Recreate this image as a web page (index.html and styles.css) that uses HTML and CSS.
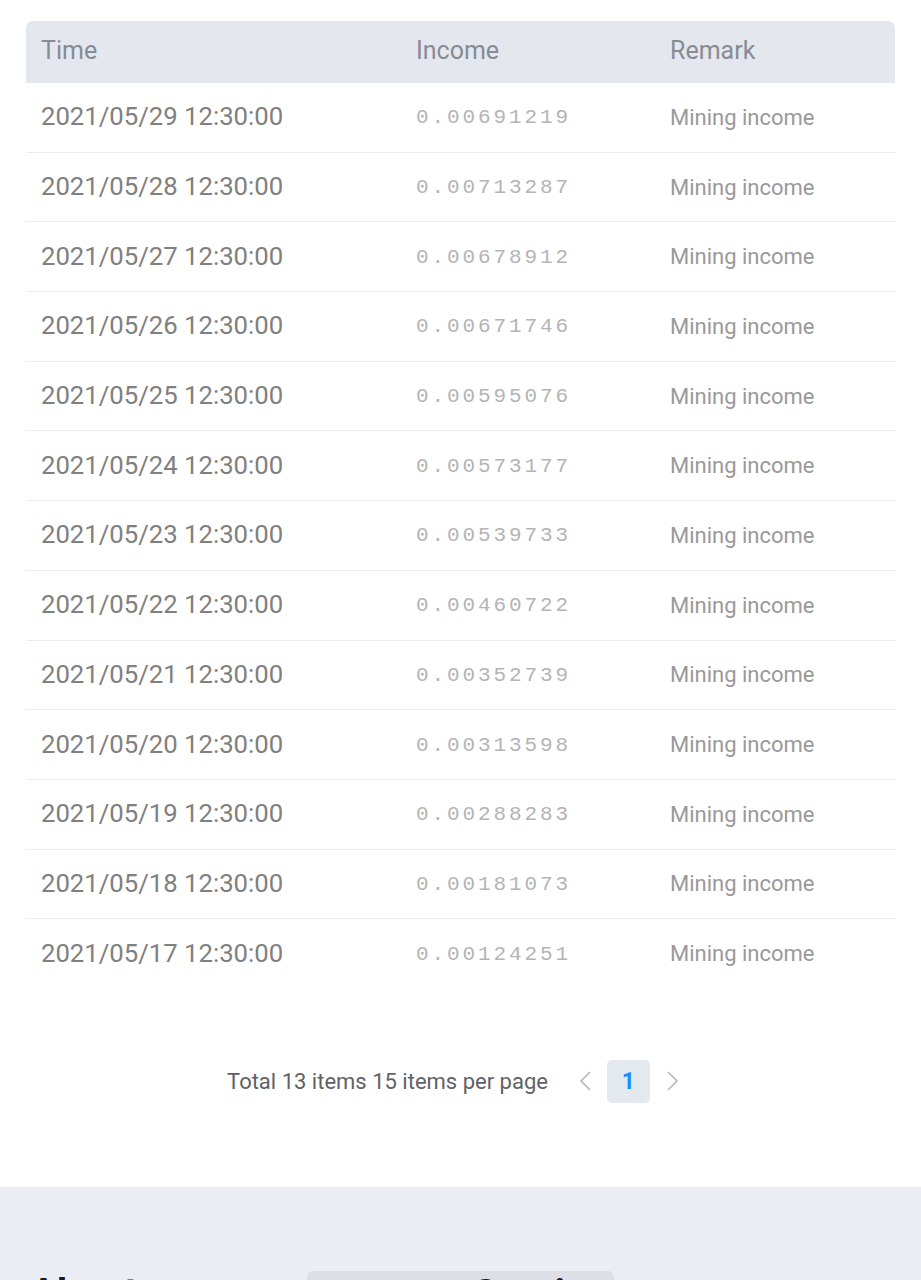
FILE: index.html
```html
<!DOCTYPE html>
<html>
<head>
<meta charset="utf-8">
<link rel="stylesheet" href="styles.css">
</head>
<body>
<div class="page">
  <main class="content">
    <div class="table">
      <div class="row head">
        <div class="c c-time">Time</div>
        <div class="c c-inc">Income</div>
        <div class="c c-rem">Remark</div>
      </div>
      <div class="row"><div class="c c-time">2021/05/29 12:30:00</div><div class="c c-inc mono">0.00691219</div><div class="c c-rem">Mining income</div></div>
      <div class="row"><div class="c c-time">2021/05/28 12:30:00</div><div class="c c-inc mono">0.00713287</div><div class="c c-rem">Mining income</div></div>
      <div class="row"><div class="c c-time">2021/05/27 12:30:00</div><div class="c c-inc mono">0.00678912</div><div class="c c-rem">Mining income</div></div>
      <div class="row"><div class="c c-time">2021/05/26 12:30:00</div><div class="c c-inc mono">0.00671746</div><div class="c c-rem">Mining income</div></div>
      <div class="row"><div class="c c-time">2021/05/25 12:30:00</div><div class="c c-inc mono">0.00595076</div><div class="c c-rem">Mining income</div></div>
      <div class="row"><div class="c c-time">2021/05/24 12:30:00</div><div class="c c-inc mono">0.00573177</div><div class="c c-rem">Mining income</div></div>
      <div class="row"><div class="c c-time">2021/05/23 12:30:00</div><div class="c c-inc mono">0.00539733</div><div class="c c-rem">Mining income</div></div>
      <div class="row"><div class="c c-time">2021/05/22 12:30:00</div><div class="c c-inc mono">0.00460722</div><div class="c c-rem">Mining income</div></div>
      <div class="row"><div class="c c-time">2021/05/21 12:30:00</div><div class="c c-inc mono">0.00352739</div><div class="c c-rem">Mining income</div></div>
      <div class="row"><div class="c c-time">2021/05/20 12:30:00</div><div class="c c-inc mono">0.00313598</div><div class="c c-rem">Mining income</div></div>
      <div class="row"><div class="c c-time">2021/05/19 12:30:00</div><div class="c c-inc mono">0.00288283</div><div class="c c-rem">Mining income</div></div>
      <div class="row"><div class="c c-time">2021/05/18 12:30:00</div><div class="c c-inc mono">0.00181073</div><div class="c c-rem">Mining income</div></div>
      <div class="row last"><div class="c c-time">2021/05/17 12:30:00</div><div class="c c-inc mono">0.00124251</div><div class="c c-rem">Mining income</div></div>
    </div>
    <div class="pager">
      <span class="total">Total 13 items 15 items per page</span>
      <span class="arrow">
        <svg width="14" height="22" viewBox="0 0 14 22"><path d="M12 2 L3 11 L12 20" fill="none" stroke="#b4b7bd" stroke-width="1.6"/></svg>
      </span>
      <span class="pnum">1</span>
      <span class="arrow">
        <svg width="14" height="22" viewBox="0 0 14 22"><path d="M2 2 L11 11 L2 20" fill="none" stroke="#b4b7bd" stroke-width="1.6"/></svg>
      </span>
    </div>
  </main>
  <footer class="footer">
    <div class="fcol about">About</div>
    <div class="fcol service"><span>Service</span></div>
  </footer>
</div>
</body>
</html>
```
FILE: styles.css
```css
html, body {
  margin: 0;
  padding: 0;
  background: #ffffff;
}
body {
  font-family: Roboto, "Liberation Sans", sans-serif;
  height: 1280px;
  overflow: hidden;
}
.page {
  width: 921px;
}
.content {
  padding: 21px 26px 0 26px;
}
.table {
  width: 869px;
}
.row {
  display: flex;
  align-items: center;
  height: 68.7px;
  border-bottom: 1px solid #ebedf2;
}
.row.last {
  border-bottom: none;
}
.row.head {
  height: 62px;
  border-bottom: none;
  background: #e4e7ee;
  border-radius: 7px 7px 0 0;
}
.c {
  padding-left: 15px;
  box-sizing: border-box;
  white-space: nowrap;
}
.c-time { width: 375px; }
.c-inc { width: 254px; }
.c-rem { width: 240px; }
.head .c {
  font-size: 25px;
  color: #888b94;
  padding-bottom: 3px;
}
.row .c-time {
  font-size: 25.7px;
  color: #808080;
  padding-bottom: 2px;
}
.row.head .c-time { font-size: 25px; color: #888b94; padding-bottom: 3px; }
.mono {
  font-family: "Liberation Mono", "DejaVu Sans Mono", monospace;
  font-size: 21px;
  letter-spacing: 2.9px;
  color: #b4b4b4;
  padding-top: 1px;
}
.row .c-rem {
  font-size: 22px;
  color: #999999;
  padding-top: 0;
}
.row.head .c-rem { font-size: 25px; color: #888b94; padding-bottom: 3px; }
.pager {
  display: flex;
  align-items: center;
  justify-content: center;
  margin-top: 72px;
  padding-right: 14px;
  height: 43px;
}
.total {
  font-size: 22px;
  color: #606266;
  margin-right: 30px;
}
.arrow {
  display: flex;
  align-items: center;
  width: 14px;
}
.pnum {
  width: 43px;
  height: 43px;
  margin: 0 16px 0 15px;
  border-radius: 5px;
  background: #e4e8ef;
  color: #1890ff;
  font-weight: 700;
  font-size: 23px;
  display: flex;
  align-items: center;
  justify-content: center;
}
.footer {
  margin-top: 84px;
  background: #eaedf4;
  height: 200px;
  display: flex;
  align-items: flex-start;
  padding: 83px 0 0 30px;
  box-sizing: border-box;
}
.fcol {
  font-size: 40px;
  font-weight: 700;
  color: #1a1a2a;
}
.about {
  width: 277px;
}
.service {
  width: 307px;
  height: 60px;
  background: #dcdfe6;
  border-radius: 6px;
  padding-left: 166px;
  box-sizing: border-box;
  margin-top: 1px;
}
```
